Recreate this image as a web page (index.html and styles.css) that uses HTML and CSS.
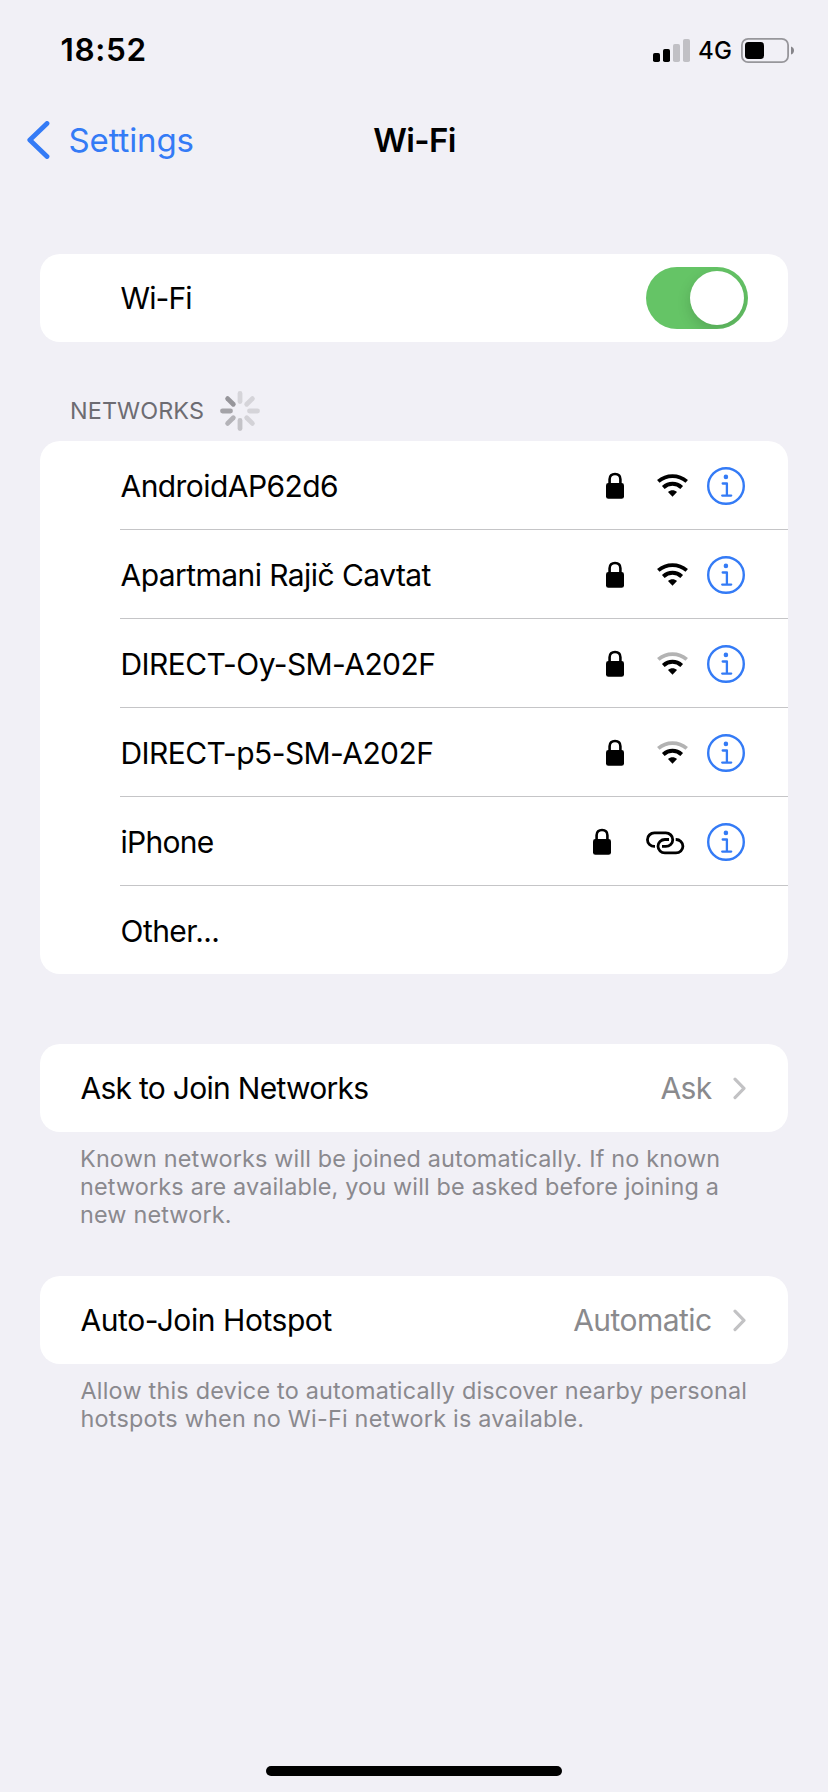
FILE: index.html
```html
<!DOCTYPE html>
<html lang="en">
<head>
<meta charset="utf-8">
<title>Wi-Fi</title>
<link rel="stylesheet" href="styles.css">
</head>
<body>
<svg class="defs" width="0" height="0" aria-hidden="true">
  <symbol id="lock" viewBox="0 0 18 27">
    <path d="M3.6 12V7.2C3.6 3.6 5.9 2 9 2s5.4 1.6 5.4 5.2V12" fill="none" stroke="#000" stroke-width="2.6"/>
    <rect x="0" y="11" width="18" height="15.8" rx="2.4"/>
  </symbol>
  <symbol id="wifi-inner" viewBox="0 0 31 23">
    <path d="M6.3 13.5C11.8 8.6 19.2 8.6 24.7 13.5" fill="none" stroke="#000" stroke-width="4"/>
    <path d="M11 18C13.6 15.5 17.4 15.5 20 18L15.5 22.8Z"/>
  </symbol>
  <symbol id="wifi-outer" viewBox="0 0 31 23">
    <path d="M1.3 7.4C9.6 .3 21.4 .3 29.7 7.4" fill="none" stroke="currentColor" stroke-width="3.8"/>
  </symbol>
  <symbol id="info" viewBox="0 0 38 38">
    <circle cx="19" cy="19" r="17.8" fill="none" stroke="#347bf6" stroke-width="2.4"/>
    <circle cx="18.9" cy="9.9" r="2.3" fill="#347bf6"/>
    <path d="M15.7 16.5H19.9V28.4M15.2 28.6H24.2" fill="none" stroke="#347bf6" stroke-width="2.3" stroke-linecap="round" stroke-linejoin="round"/>
  </symbol>
  <symbol id="link" viewBox="0 0 39 24">
    <path d="M9 15.4H8.4A6.9 6.7 0 0 1 8.4 1.9H19.8A6.9 6.7 0 0 1 19.8 15.4H16M23 8.5H18.9A6.9 6.7 0 0 0 18.9 21.9H30A6.9 6.7 0 0 0 30 8.5H29.7" fill="none" stroke="#000" stroke-width="2.8"/>
  </symbol>
  <symbol id="chevron" viewBox="0 0 14 23">
    <path d="M2 2.2L11 11.4L2 20.6" fill="none" stroke="#c2c2c4" stroke-width="3.1" stroke-linecap="round" stroke-linejoin="round"/>
  </symbol>
</svg>
<div class="screen">
  <div class="status">
    <span class="time">18:52</span>
    <svg class="signal" width="37" height="23" viewBox="0 0 37 23">
      <rect x="0" y="14" width="7" height="9" rx="1.8"/>
      <rect x="10" y="10" width="7" height="13" rx="1.8"/>
      <rect x="20" y="5" width="7" height="18" rx="1.8" fill="#c1c0c5"/>
      <rect x="30" y="0" width="7" height="23" rx="1.8" fill="#c1c0c5"/>
    </svg>
    <span class="carrier">4G</span>
    <svg class="battery" width="53" height="25" viewBox="0 0 53 25">
      <rect x=".9" y=".9" width="46.2" height="23.2" rx="6.2" fill="none" stroke="#97969b" stroke-width="1.8"/>
      <rect x="4" y="4" width="19" height="17" rx="3.4"/>
      <path d="M50 8.4C52 9 53 10.6 53 12.5S52 16 50 16.6Z" fill="#86858a"/>
    </svg>
  </div>

  <header class="nav">
    <a class="back">
      <svg width="23" height="38" viewBox="0 0 23 38"><path d="M20 2.5L2.8 19L20 35.5" fill="none" stroke="#347bf6" stroke-width="4.8" stroke-linecap="round" stroke-linejoin="round"/></svg>
      <span class="back-label">Settings</span>
    </a>
    <h1 class="title">Wi-Fi</h1>
  </header>

  <main class="content">
    <section class="card">
      <div class="row indented toggle-row"><span class="wifi-label">Wi-Fi</span><span class="toggle"><span class="knob"></span></span></div>
    </section>

    <div class="section-head">
      <span>NETWORKS</span>
      <svg width="40" height="40" viewBox="-20 -20 40 40" stroke-width="4.8" stroke-linecap="round">
        <path d="M0-17.5V-9.5" stroke="#d5d4d9"/>
        <path d="M12.4-12.4L6.7-6.7" stroke="#d5d4d9"/>
        <path d="M17.5 0H9.5" stroke="#d5d4d9"/>
        <path d="M12.4 12.4L6.7 6.7" stroke="#d3d2d7"/>
        <path d="M0 17.5V9.5" stroke="#c4c3c8"/>
        <path d="M-12.4 12.4L-6.7 6.7" stroke="#b4b3b8"/>
        <path d="M-17.5 0H-9.5" stroke="#a4a3a8"/>
        <path d="M-12.4-12.4L-6.7-6.7" stroke="#96959a"/>
      </svg>
    </div>

    <section class="card networks">
      <div class="row indented"><span>AndroidAP62d6</span><span class="icons"><svg class="lock"><use href="#lock"/></svg><svg class="wifi"><use href="#wifi-outer"/><use href="#wifi-inner"/></svg><svg class="info"><use href="#info"/></svg></span></div>
      <div class="row indented"><span>Apartmani Rajič Cavtat</span><span class="icons"><svg class="lock"><use href="#lock"/></svg><svg class="wifi"><use href="#wifi-outer"/><use href="#wifi-inner"/></svg><svg class="info"><use href="#info"/></svg></span></div>
      <div class="row indented"><span class="capital-start">DIRECT-Oy-SM-A202F</span><span class="icons"><svg class="lock"><use href="#lock"/></svg><svg class="wifi weak"><use href="#wifi-outer"/><use href="#wifi-inner"/></svg><svg class="info"><use href="#info"/></svg></span></div>
      <div class="row indented"><span class="capital-start">DIRECT-p5-SM-A202F</span><span class="icons"><svg class="lock"><use href="#lock"/></svg><svg class="wifi weak"><use href="#wifi-outer"/><use href="#wifi-inner"/></svg><svg class="info"><use href="#info"/></svg></span></div>
      <div class="row indented"><span class="hotspot-name">iPhone</span><span class="icons"><svg class="lock"><use href="#lock"/></svg><svg class="link"><use href="#link"/></svg><svg class="info"><use href="#info"/></svg></span></div>
      <div class="row indented"><span class="other">Other...</span></div>
    </section>

    <section class="card ask-card">
      <div class="row"><span class="ask-label">Ask to Join Networks</span><span class="value ask-value">Ask</span><svg class="chevron"><use href="#chevron"/></svg></div>
    </section>
    <p class="note ask-note">Known networks will be joined automatically. If no known<br>networks are available, you will be asked before joining a<br>new network.</p>

    <section class="card hotspot-card">
      <div class="row"><span class="hotspot-label">Auto-Join Hotspot</span><span class="value">Automatic</span><svg class="chevron"><use href="#chevron"/></svg></div>
    </section>
    <p class="note hotspot-note">Allow this device to automatically discover nearby personal<br>hotspots when no Wi-Fi network is available.</p>
  </main>

  <div class="home-indicator"></div>
</div>
</body>
</html>
```

FILE: styles.css
```css
* { box-sizing: border-box; }
body {
  margin: 0;
  background: #f1f0f6;
  color: #000;
  font-family: Inter, "Liberation Sans", sans-serif;
}
svg { display: block; flex: none; }
.defs { display: none; }
.screen {
  display: flex;
  flex-direction: column;
  width: 828px;
  height: 1792px;
  padding-bottom: 16px;
}

.status {
  display: flex;
  align-items: center;
  height: 100px;
  padding: 0 34px 0 60.5px;
}
.time {
  margin-bottom: 2px;
  font-size: 31.5px;
  font-weight: 600;
  letter-spacing: .66px;
}
.signal { margin-left: auto; }
.carrier {
  margin: 0 10px 0 8.5px;
  width: 33px;
  font-size: 24px;
  font-weight: 500;
  letter-spacing: .2px;
}

.nav {
  display: grid;
  grid-template-columns: 1fr auto 1fr;
  align-items: center;
  height: 80px;
  padding: 0 26px 0 27px;
}
.back {
  display: flex;
  align-items: center;
  gap: 18.5px;
  color: #347bf6;
  font-size: 33px;
  letter-spacing: -.13px;
}
.title {
  margin: 0;
  font-size: 33px;
  font-weight: 600;
  letter-spacing: -.65px;
}

.content { padding: 74px 40px 0; }
.card {
  background: #fff;
  border-radius: 20px;
}
.row {
  display: flex;
  align-items: center;
  height: 88px;
  padding-left: 40.5px;
  font-size: 30px;
  line-height: 36px;
  letter-spacing: -.56px;
  white-space: nowrap;
}
.row.indented {
  padding-left: 0;
  margin-left: 80px;
}
.row.indented > span:first-child { margin-left: .5px; }
.row.indented > .capital-start {
  margin-left: 0;
  letter-spacing: -.59px;
}
.networks .row + .row {
  height: 89px;
  border-top: 1px solid #c5c5c7;
}
.networks .row > span:first-child { padding-top: 2px; }
.row .wifi-label { letter-spacing: -.9px; }
.row .hotspot-name { letter-spacing: -.75px; }
.row .other { letter-spacing: -.55px; }
.row .ask-label { letter-spacing: -.72px; }
.row .hotspot-label { letter-spacing: -.44px; }
.networks .row > .other { padding-top: 0; }

.toggle {
  display: flex;
  justify-content: flex-end;
  width: 102px;
  height: 62px;
  margin: 0 40px 0 auto;
  padding: 4px;
  border-radius: 31px;
  background: #65c466;
  overflow: hidden;
}
.knob {
  width: 54px;
  height: 54px;
  border-radius: 50%;
  background: #fff;
  box-shadow: 0 5px 14px rgba(0, 0, 0, .15);
}

.section-head {
  display: flex;
  align-items: center;
  gap: 15.5px;
  height: 99px;
  padding: 38px 0 0 30px;
  color: #6d6c72;
  font-size: 23.4px;
  letter-spacing: .1px;
}
.icons {
  display: flex;
  align-items: center;
  margin: 1px 43px 0 auto;
}
.lock { width: 18px; height: 27px; margin-right: 32.5px; }
.wifi { width: 31px; height: 23px; margin-right: 19.5px; color: #000; }
.weak { color: #b3b3b3; }
.link { width: 39px; height: 24px; margin: 2px 22px 0 2.5px; }
.info { width: 38px; height: 38px; }

.ask-card { margin-top: 70px; }
.value {
  margin-left: auto;
  color: #8a8a8d;
}
.ask-value { letter-spacing: -.7px; }
.chevron {
  width: 14px;
  height: 23px;
  margin: 0 41px 0 21.5px;
}
.note {
  margin: 0;
  padding: 13px 0 0 40px;
  color: #8a898e;
  font-size: 23.4px;
  line-height: 28px;
  letter-spacing: .167px;
  white-space: nowrap;
}
.hotspot-card { margin-top: 47px; }
.hotspot-note {
  padding-left: 40.5px;
  letter-spacing: .21px;
}

.home-indicator {
  width: 296px;
  height: 10px;
  margin: auto auto 0;
  border-radius: 5px;
  background: #000;
}
```
